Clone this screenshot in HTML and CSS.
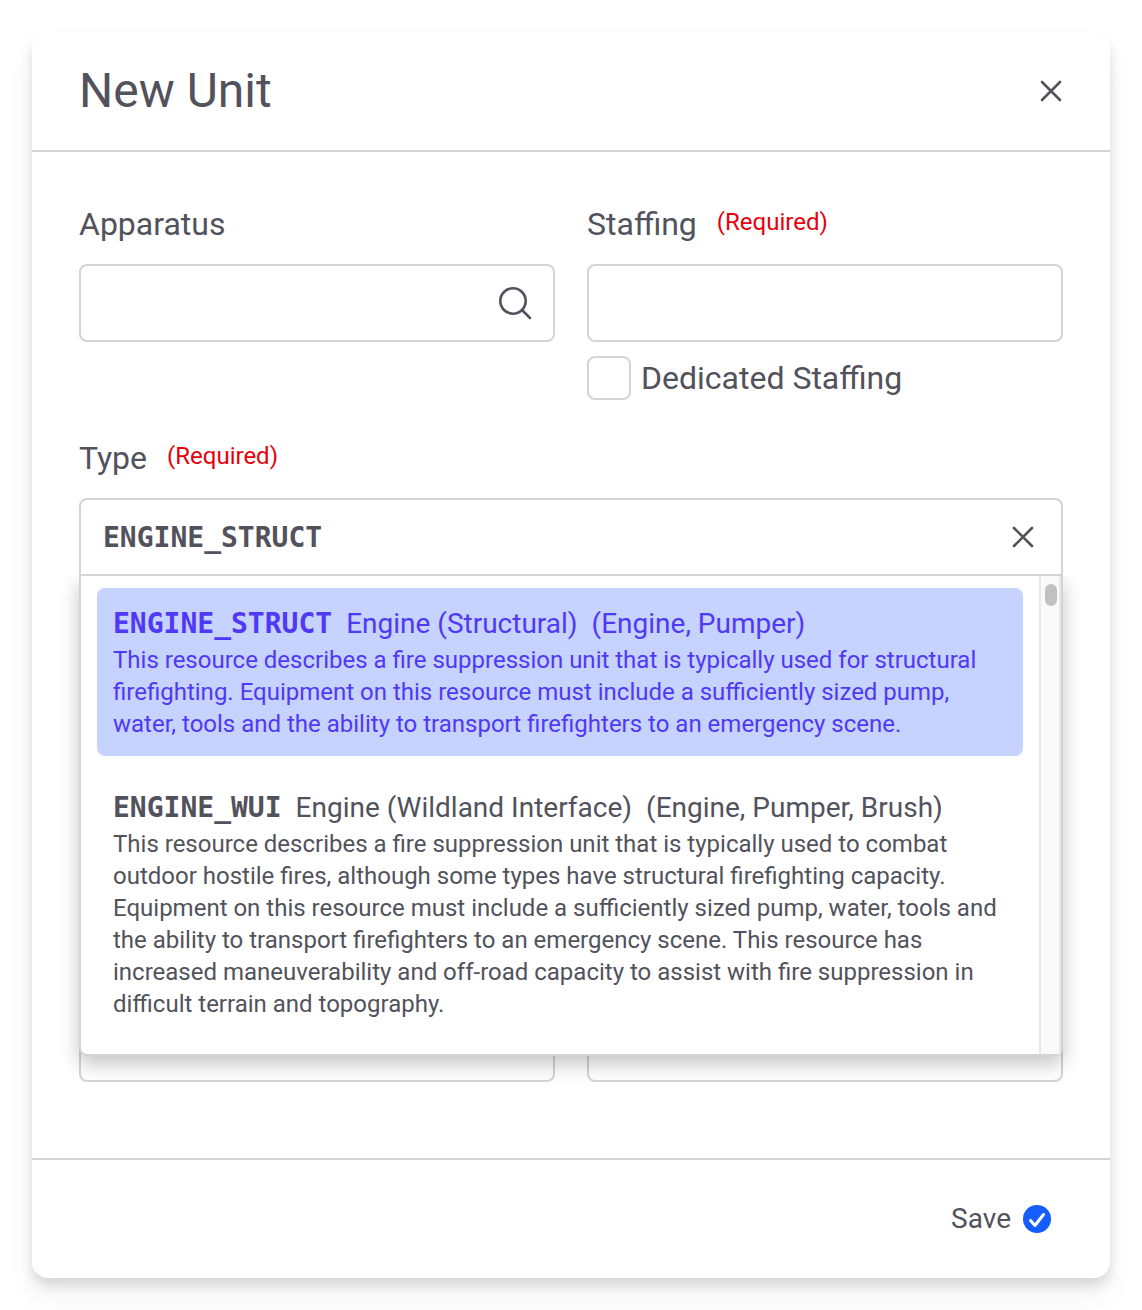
FILE: index.html
```html
<!DOCTYPE html>
<html lang="en">
<head>
<meta charset="utf-8">
<meta name="viewport" content="width=device-width, initial-scale=1">
<title>New Unit</title>
<link rel="stylesheet" href="styles.css">
</head>

<body>
<form class="modal">
  <header class="modal-header">
    <h1>New Unit</h1>
    <button type="button" class="icon-btn" aria-label="Close">
      <svg width="24" height="24" viewBox="0 0 24 24"><path d="M3 3L21 21M21 3L3 21"/></svg>
    </button>
  </header>

  <div class="modal-body">
    <div class="field">
      <div class="label-row"><label for="apparatus">Apparatus</label></div>
      <div class="input-box search">
        <input type="text" id="apparatus">
        <button type="button" class="icon-btn" aria-label="Search">
          <svg width="36" height="36" viewBox="0 0 36 36"><circle cx="16" cy="16" r="12.7"/><path d="M25 25L33 33"/></svg>
        </button>
      </div>
    </div>

    <div class="field">
      <div class="label-row"><label for="staffing">Staffing</label><span class="required">(Required)</span></div>
      <div class="input-box"><input type="text" id="staffing"></div>
      <div class="check-row">
        <input type="checkbox" id="dedicated">
        <label for="dedicated">Dedicated Staffing</label>
      </div>
    </div>

    <div class="field wide">
      <div class="label-row"><label for="type">Type</label><span class="required">(Required)</span></div>
      <div class="combo">
        <div class="input-box open">
          <input type="text" id="type" class="code" value="ENGINE_STRUCT" role="combobox" aria-expanded="true" aria-controls="type-list">
          <button type="button" class="icon-btn" aria-label="Clear">
            <svg width="24" height="24" viewBox="0 0 24 24"><path d="M3 3L21 21M21 3L3 21"/></svg>
          </button>
        </div>
        <div class="dropdown">
          <ul class="options" id="type-list" role="listbox">
            <li class="option active" role="option" aria-selected="true">
              <div class="option-title"><b class="code">ENGINE_STRUCT</b><span>Engine (Structural)</span><span>(Engine, Pumper)</span></div>
              <p>This resource describes a fire suppression unit that is typically used for structural firefighting. Equipment on this resource must include a sufficiently sized pump, water, tools and the ability to transport firefighters to an emergency scene.</p>
            </li>
            <li class="option" role="option" aria-selected="false">
              <div class="option-title"><b class="code">ENGINE_WUI</b><span>Engine (Wildland Interface)</span><span>(Engine, Pumper, Brush)</span></div>
              <p>This resource describes a fire suppression unit that is typically used to combat outdoor hostile fires, although some types have structural firefighting capacity. Equipment on this resource must include a sufficiently sized pump, water, tools and the ability to transport firefighters to an emergency scene. This resource has increased maneuverability and off-road capacity to assist with fire suppression in difficult terrain and topography.</p>
            </li>
          </ul>
          <div class="scrollbar"><div class="thumb"></div></div>
        </div>
      </div>
    </div>

    <div class="field last"><div class="input-box"><input type="text" aria-label="Unit ID"></div></div>
    <div class="field last"><div class="input-box"><input type="text" aria-label="Status"></div></div>
  </div>

  <footer class="modal-footer">
    <button type="submit" class="save">
      Save
      <svg width="28" height="28" viewBox="0 0 28 28"><circle cx="14" cy="14" r="14"/><path d="M7.5 15.5L12 20.5L20.5 9.5"/></svg>
    </button>
  </footer>
</form>
</body>
</html>
```

FILE: styles.css
```css
*{box-sizing:border-box;}
body{margin:0;padding:32px;background:#fff;color:#52525c;font:32px/48px Roboto,sans-serif;}
h1,p,ul{margin:0;padding:0;}
ul{list-style:none;}
input,button{font:inherit;color:inherit;}

.modal{background:#fff;border-radius:16px;box-shadow:0 8px 12px rgba(0,0,0,.12),0 18px 32px rgba(0,0,0,.05);}
.modal-header{display:flex;align-items:center;justify-content:space-between;height:120px;padding:0 47px;border-bottom:2px solid #d4d4d8;}
.modal-header h1{font-size:48px;line-height:56px;font-weight:400;}
.icon-btn{display:flex;padding:0;border:0;background:none;cursor:pointer;}
.icon-btn svg{fill:none;stroke:currentColor;stroke-width:2.6;stroke-linecap:round;}

.modal-body{display:grid;grid-template-columns:repeat(2,minmax(0,1fr));column-gap:32px;row-gap:34px;padding:48px 47px 76px;}
.wide{grid-column:1 / -1;}
.last{display:flex;flex-direction:column;justify-content:flex-end;min-height:472px;}
.label-row{display:flex;gap:20px;margin-bottom:16px;}
.required{color:#e7000b;font-size:24px;line-height:44px;}

.input-box{display:flex;align-items:center;height:78px;padding:0 22px;border:2px solid #d4d4d8;border-radius:8px;background:#fff;}
.input-box input{flex:1;min-width:0;height:100%;padding:0;border:0;outline:0;background:none;}
.input-box.search{padding-right:20px;}
.input-box.open{border-radius:8px 8px 0 0;padding-right:26px;}
.code,.input-box .code{font-family:"DejaVu Sans Mono",monospace;font-size:28px;font-weight:700;}

.check-row{display:flex;align-items:center;gap:10px;height:44px;margin-top:14px;}
.check-row input{appearance:none;width:44px;height:44px;margin:0;border:2px solid #d4d4d8;border-radius:8px;}

/* the list hangs over the fields below it */
.combo{position:relative;}
.dropdown{position:absolute;top:100%;left:0;right:0;z-index:1;display:flex;height:480px;border:2px solid #d4d4d8;border-top:0;border-radius:0 0 8px 8px;background:#fff;box-shadow:0 8px 20px rgba(0,0,0,.24);clip-path:inset(0 -40px -40px -40px);}
.options{flex:1;display:flex;flex-direction:column;gap:16px;padding:12px 16px;overflow:hidden;}
.option{padding:16px;border-radius:8px;}
.option.active{background:#c6d2ff;color:#4f39f6;}
.option-title{display:flex;gap:14px;font-size:28px;line-height:40px;}
.option p{font-size:24px;line-height:32px;}
.scrollbar{width:22px;padding:8px 4px;border:solid #e8e8e8;border-width:0 2px;background:#fafafa;}
.thumb{width:12px;height:22px;border-radius:6px;background:#c1c1c1;}

.modal-footer{display:flex;align-items:center;justify-content:flex-end;height:120px;padding:0 59px;border-top:2px solid #d4d4d8;}
.save{display:flex;align-items:center;gap:12px;padding:0;border:0;background:none;font-size:28px;line-height:40px;cursor:pointer;}
.save svg circle{fill:#155dfc;}
.save svg path{fill:none;stroke:#fff;stroke-width:3;stroke-linecap:round;stroke-linejoin:round;}
```
